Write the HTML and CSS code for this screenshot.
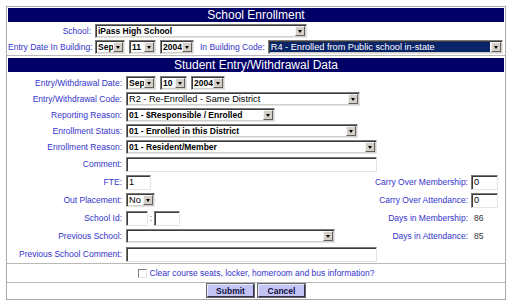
FILE: index.html
```html
<!DOCTYPE html>
<html lang="en">

<head>
    <meta charset="UTF-8">
    <title>School Enrollment</title>
    <link rel="stylesheet" href="styles.css">
</head>

<body>
    <div class="panel">
        <div class="section first">
            <div class="head">School Enrollment</div>
            <div class="row">
                <span class="lbl">School:</span>
                <span class="sel bold w-school"><span class="val">iPass High School</span><span class="arr"></span></span>
            </div>
            <div class="row">
                <span class="lbl">Entry Date In Building:</span>
                <span class="sel bold w-mon"><span class="val">Sep</span><span class="arr"></span></span>
                <span class="sel bold w-day"><span class="val">11</span><span class="arr"></span></span>
                <span class="sel bold w-year"><span class="val">2004</span><span class="arr"></span></span>
                <span class="lbl inline">In Building Code:</span>
                <span class="sel picked grow"><span class="val">R4 - Enrolled from Public school in-state</span><span class="arr"></span></span>
            </div>
        </div>

        <div class="section second">
            <div class="head">Student Entry/Withdrawal Data</div>
            <div class="rows">
                <div class="row">
                    <span class="lbl">Entry/Withdrawal Date:</span>
                    <span class="sel bold w-mon"><span class="val">Sep</span><span class="arr"></span></span>
                    <span class="sel bold w-day"><span class="val">10</span><span class="arr"></span></span>
                    <span class="sel bold w-year"><span class="val">2004</span><span class="arr"></span></span>
                </div>
                <div class="row">
                    <span class="lbl">Entry/Withdrawal Code:</span>
                    <span class="sel w-code"><span class="val">R2 - Re-Enrolled - Same District</span><span class="arr"></span></span>
                </div>
                <div class="row">
                    <span class="lbl">Reporting Reason:</span>
                    <span class="sel bold w-reason"><span class="val">01 - $Responsible / Enrolled</span><span class="arr"></span></span>
                </div>
                <div class="row">
                    <span class="lbl">Enrollment Status:</span>
                    <span class="sel bold w-status"><span class="val">01 - Enrolled in this District</span><span class="arr"></span></span>
                </div>
                <div class="row">
                    <span class="lbl">Enrollment Reason:</span>
                    <span class="sel bold w-wide"><span class="val">01 - Resident/Member</span><span class="arr"></span></span>
                </div>
                <div class="row tall">
                    <span class="lbl">Comment:</span>
                    <span class="txt w-wide"></span>
                </div>
                <div class="row tall">
                    <span class="lbl">FTE:</span>
                    <span class="txt w-fte">1</span>
                    <span class="side">
                        <span class="lbl">Carry Over Membership:</span>
                        <span class="txt w-side">0</span>
                    </span>
                </div>
                <div class="row tall">
                    <span class="lbl">Out Placement:</span>
                    <span class="sel w-out"><span class="val">No</span><span class="arr"></span></span>
                    <span class="side">
                        <span class="lbl">Carry Over Attendance:</span>
                        <span class="txt w-side">0</span>
                    </span>
                </div>
                <div class="row tall">
                    <span class="lbl">School Id:</span>
                    <span class="txt w-id1"></span>
                    <span class="colon">:</span>
                    <span class="txt w-id2"></span>
                    <span class="side">
                        <span class="lbl">Days in Membership:</span>
                        <span class="num">86</span>
                    </span>
                </div>
                <div class="row tall">
                    <span class="lbl">Previous School:</span>
                    <span class="sel w-prev"><span class="val"></span><span class="arr"></span></span>
                    <span class="side">
                        <span class="lbl">Days in Attendance:</span>
                        <span class="num">85</span>
                    </span>
                </div>
                <div class="row tall">
                    <span class="lbl">Previous School Comment:</span>
                    <span class="txt w-wide"></span>
                </div>
            </div>
        </div>

        <div class="section check-row">
            <span class="box"></span>
            <span class="check-text">Clear course seats, locker, homeroom and bus information?</span>
        </div>

        <div class="section btn-row">
            <button type="button" class="btn">Submit</button>
            <button type="button" class="btn">Cancel</button>
        </div>
    </div>
</body>

</html>
```

FILE: styles.css
```css
body {
    margin: 0;
    background-color: #fff;
    font-family: "Liberation Sans", Arial, sans-serif;
    font-size: 8.5px;
    color: #000;
}

.panel {
    width: 498px;
    margin: 6px 0 0 6px;
    border: 1px solid #a9a9a9;
}

.section {
    padding: 0 1px;
}

.section + .section {
    border-top: 1px solid #b9b9b9;
}

.head {
    height: 14px;
    line-height: 14px;
    margin: 1px 0;
    background-color: #000066;
    color: #fff;
    font-size: 12px;
    text-align: center;
}

.second {
    padding-top: 1px;
}

.second .rows {
    padding-top: 2px;
}

.row {
    display: flex;
    align-items: center;
    height: 16px;
}

.row.tall {
    height: 18px;
}

.lbl {
    flex: none;
    color: #3333cc;
    text-align: right;
    white-space: nowrap;
}

.first .lbl {
    width: 83px;
    margin-right: 4px;
}

.first .lbl.inline {
    width: auto;
    margin-left: 2px;
    margin-right: 3px;
}

.second .lbl {
    width: 114px;
    margin-right: 4px;
}

/* fake select boxes, classic windows look */
.sel {
    flex: none;
    display: flex;
    align-items: center;
    height: 14px;
    box-sizing: border-box;
    margin-right: 4px;
    border-style: solid;
    border-width: 1px;
    border-color: #7a7a7a #e4e4e4 #e4e4e4 #7a7a7a;
    box-shadow: inset 1px 1px 0 #3c3c3c, inset -1px -1px 0 #d4d0c8;
    background-color: #fff;
    font-size: 9.2px;
    white-space: nowrap;
    overflow: hidden;
}

.sel.bold {
    font-size: 8.5px;
    font-weight: bold;
}

.sel .val {
    flex: 1;
    padding-left: 2px;
    overflow: hidden;
}

.sel .arr {
    flex: none;
    position: relative;
    width: 10px;
    height: 10px;
    margin-right: 1px;
    background-color: #d4d0c8;
    border-style: solid;
    border-width: 1px;
    border-color: #f4f4f4 #606060 #606060 #f4f4f4;
    box-sizing: border-box;
}

.sel .arr::after {
    content: "";
    position: absolute;
    left: 2px;
    top: 3px;
    border-left: 2.5px solid transparent;
    border-right: 2.5px solid transparent;
    border-top: 3px solid #000;
}

.sel.picked .val {
    align-self: stretch;
    margin: 1px;
    padding-left: 1px;
    line-height: 10px;
    background-color: #0a246a;
    color: #fff;
}

.grow {
    flex: 1;
    margin-right: 1px;
}

.w-school { width: 212px; }
.w-mon { width: 30px; }
.w-day { width: 27px; }
.w-year { width: 34px; }
.w-code { width: 234px; }
.w-reason { width: 149px; }
.w-status { width: 232px; }
.w-wide { width: 251px; }
.w-out { width: 29px; }
.w-prev { width: 209px; }
.w-fte { width: 25px; }
.w-side { width: 27px; }
.w-id1 { width: 22px; }
.w-id2 { width: 26px; }

.txt {
    flex: none;
    height: 15px;
    line-height: 13px;
    box-sizing: border-box;
    padding-left: 2px;
    border-style: solid;
    border-width: 1px;
    border-color: #7a7a7a #e4e4e4 #e4e4e4 #7a7a7a;
    box-shadow: inset 1px 1px 0 #3c3c3c;
    background-color: #fff;
    font-size: 9.2px;
}

.colon {
    width: 6px;
    text-align: center;
    color: #555;
}

.side {
    display: flex;
    align-items: center;
    margin-left: auto;
    margin-right: 6px;
}

.side .lbl {
    width: auto;
    margin-right: 3px;
}

.num {
    width: 27px;
    padding-left: 3px;
    box-sizing: border-box;
    color: #333;
}

.check-row {
    display: flex;
    align-items: center;
    justify-content: center;
    height: 18px;
}

.box {
    width: 9px;
    height: 9px;
    box-sizing: border-box;
    margin-right: 3px;
    border-style: solid;
    border-width: 1px;
    border-color: #808080 #e4e4e4 #e4e4e4 #808080;
    background-color: #fff;
}

.check-text {
    color: #3333cc;
}

.btn-row {
    display: flex;
    justify-content: center;
    gap: 4px;
    height: 15px;
    padding-top: 1px;
}

.btn {
    width: 47px;
    height: 13px;
    padding: 0;
    border-style: solid;
    border-width: 1px;
    border-color: #e8e8ff #303050 #303050 #e8e8ff;
    outline: 1px solid #666;
    background-color: #c4c4f4;
    color: #101040;
    font-family: "Liberation Sans", Arial, sans-serif;
    font-size: 8.5px;
    font-weight: bold;
}
```
